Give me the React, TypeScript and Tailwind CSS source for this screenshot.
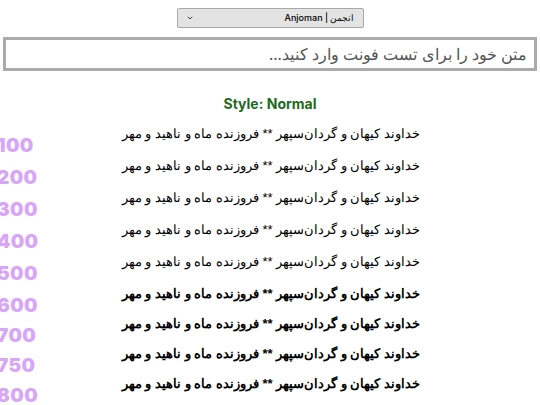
import { ChevronDown } from "lucide-react";

const weights = [
  { label: "100", cls: "font-normal" },
  { label: "200", cls: "font-normal" },
  { label: "300", cls: "font-normal" },
  { label: "400", cls: "font-normal" },
  { label: "500", cls: "font-normal" },
  { label: "600", cls: "font-bold" },
  { label: "700", cls: "font-bold" },
  { label: "750", cls: "font-bold" },
  { label: "800", cls: "font-bold" },
];

const sample = "خداوند کیهان و گردان‌سپهر ** فروزنده ماه و ناهید و مهر";

export default function App() {
  return (
    <div className="w-[540px] h-[405px] overflow-hidden bg-white font-['Liberation_Sans',sans-serif]">
      <div className="flex justify-center pt-[8px]">
        <div
          dir="rtl"
          className="w-[187px] h-[20px] flex items-center justify-between px-[8px] bg-[#e3e3e3] border border-[#a9a9a9] rounded-[2px] text-[9px] text-black"
        >
          <span className="font-['Inter',sans-serif] font-medium">انجمن | Anjoman</span>
          <ChevronDown className="w-[8px] h-[8px] text-[#444]" strokeWidth={3} />
        </div>
      </div>

      <div className="px-[3px] pt-[9px]">
        <div
          dir="rtl"
          className="h-[34px] border-[3px] border-[#ababab] flex items-center px-[7px] text-[16px] text-[#555] font-['Noto_Sans',sans-serif]"
        >
          متن خود را برای تست فونت وارد کنید...
        </div>
      </div>

      <div className="text-center pt-[22px] text-[14px] font-bold text-[#1d6b1d] font-['Inter',sans-serif]">
        Style: Normal
      </div>

      <div className="flex flex-col pt-[10px]">
        {weights.map((w, i) => (
          <div key={w.label} className={`flex items-start ${i < 5 ? "h-[32px]" : "h-[30px]"}`}>
            <span className="w-[40px] -ml-[3px] pt-[13px] text-[19px] leading-[18px] font-black text-[#d8a6f6] font-['Inter',sans-serif] tracking-[0.02em]">
              {w.label}
            </span>
            <span
              dir="rtl"
              className={`flex-1 text-center pr-[35px] text-[13px] leading-[20px] text-black ${w.cls}`}
            >
              {sample}
            </span>
          </div>
        ))}
      </div>
    </div>
  );
}
